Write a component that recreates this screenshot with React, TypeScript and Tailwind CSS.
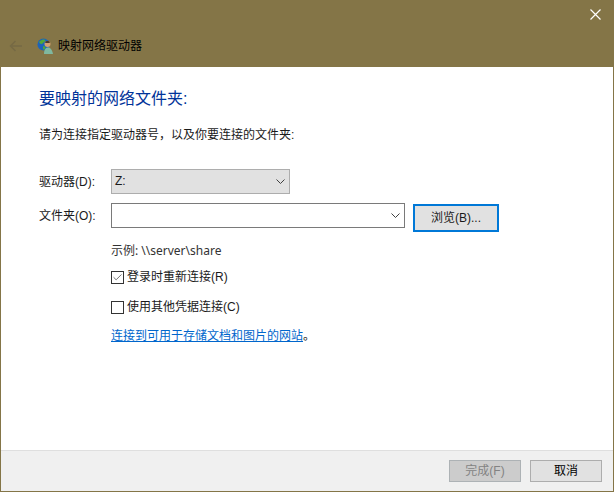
import { Check } from "lucide-react";

const font = { fontFamily: '"Liberation Sans", "Noto Sans CJK SC", sans-serif' };

function Chevron() {
  return (
    <svg width="9" height="6" viewBox="0 0 9 6" fill="none" stroke="#404040" strokeWidth="1">
      <path d="M0.500 0.500l4 4 4-4" />
    </svg>
  );
}

function GlobeIcon() {
  return (
    <svg width="17" height="17" viewBox="0 0 17 17">
      <circle cx="6.5" cy="6.5" r="6" fill="#1d63b8" />
      <path d="M2 4c2-2 4-3 6-2 1 1-1 2-2 3-1 2-3 1-4-1zM6 8c2 0 3 1 2 3-1 1-2 1-2-1z" fill="#4ea83a" />
      <circle cx="10.5" cy="6" r="3" fill="#d2a070" />
      <path d="M8 4.5c0-2 5-2 5 0l-1 .5h-3z" fill="#4c3a2a" />
      <path d="M7 16c0-5 2-6.500 4-6.500s4 1.500 5 6.500z" fill="#7fb8a0" />
    </svg>
  );
}

export default function App() {
  return (
    <div className="w-[614px] h-[492px] flex flex-col border-r border-b border-l border-[#847547] bg-white text-[12px] text-[#1a1a1a]" style={font}>
      {/* title bar */}
      <div className="h-[67px] -mx-px bg-[#847547] flex flex-col shrink-0">
        <div className="h-[30px] flex justify-end items-start pt-[9px] pr-[13px]">
          <svg width="11" height="11" viewBox="0 0 11 11" stroke="#ffffff" strokeWidth="1.2">
            <path d="M0.500 0.500l10 10M10.500 0.500l-10 10" />
          </svg>
        </div>
        <div className="flex items-center pl-[9px] h-[32px]">
          <svg width="14" height="12" viewBox="0 0 14 12" fill="none" stroke="#766a45" strokeWidth="1.500">
            <path d="M13 6H1.500M6.500 1L1.500 6l5 5" />
          </svg>
          <div className="ml-[14px]"><GlobeIcon /></div>
          <span className="ml-[4px] text-[12px] text-black">映射网络驱动器</span>
        </div>
      </div>

      {/* body */}
      <div className="flex-1 pl-[38px] pt-[20px]">
        <h1 className="mt-[2px] text-[16px] leading-[20px] font-normal text-[#003399]">要映射的网络文件夹:</h1>
        <p className="mt-[18px] leading-[16px]">请为连接指定驱动器号，以及你要连接的文件夹:</p>

        <div className="mt-[26px] flex items-center h-[25px]">
          <label className="w-[72px]">驱动器(D):</label>
          <div className="w-[179px] h-[25px] border border-[#adadad] bg-[#e1e1e1] flex items-center justify-between pl-[3px] pr-[4px]">
            <span className="-mt-[1px]">Z:</span>
            <Chevron />
          </div>
        </div>

        <div className="mt-[9px] flex items-start">
          <label className="w-[72px] h-[25px] flex items-center">文件夹(O):</label>
          <div className="w-[294px] h-[25px] border border-[#7a7a7a] bg-white flex items-center justify-end pr-[4px]">
            <Chevron />
          </div>
          <button className="ml-[8px] mt-[1px] w-[86px] h-[28px] border-2 border-[#0078d7] bg-[#e1e1e1] text-[12px]">浏览(B)...</button>
        </div>

        <div className="ml-[72px]">
          <p className="mt-[11px] leading-[16px] text-[#333333]" style={{ fontFamily: '"Noto Sans", "Noto Sans CJK SC", sans-serif' }}>示例: \\server\share</p>
          <label className="mt-[11px] flex items-center h-[14px]">
            <span className="w-[13px] h-[13px] border border-[#333333] flex items-center justify-center">
              <Check size={11} strokeWidth={1.500} className="text-[#333333]" />
            </span>
            <span className="ml-[3px]">登录时重新连接(R)</span>
          </label>
          <label className="mt-[16px] flex items-center h-[14px]">
            <span className="w-[13px] h-[13px] border border-[#333333]" />
            <span className="ml-[3px]">使用其他凭据连接(C)</span>
          </label>
          <p className="mt-[14px] leading-[16px]">
            <a className="text-[#0066cc] underline">连接到可用于存储文档和图片的网站</a>。
          </p>
        </div>
      </div>

      {/* footer */}
      <div className="h-[41px] shrink-0 border-t border-[#dfdfdf] bg-[#f0f0f0] flex justify-end gap-[9px] pt-[9px] pr-[11px]">
        <button className="w-[72px] h-[22px] border border-[#adb2b5] bg-[#cccccc] text-[#838383] text-[12px]">完成(F)</button>
        <button className="w-[72px] h-[22px] border border-[#adadad] bg-[#e1e1e1] text-black text-[12px]">取消</button>
      </div>
    </div>
  );
}
